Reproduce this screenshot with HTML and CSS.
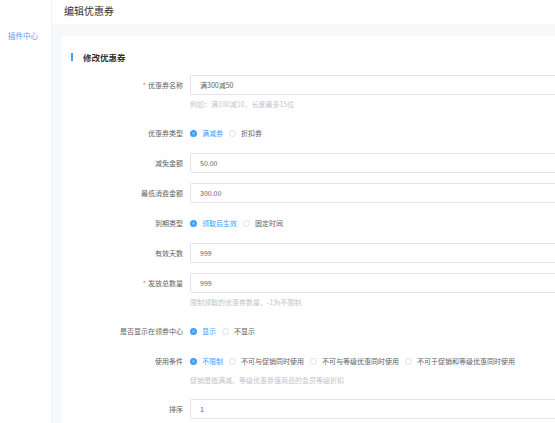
FILE: index.html
```html
<html>
<head>
    <meta charset="utf-8">
    <link rel="stylesheet" href="styles.css">
</head>
<body>
    <div class="layout">
        <aside class="sidebar">
            <div class="menu-item">插件中心</div>
        </aside>
        <div class="main">
            <div class="header">编辑优惠券</div>
            <div class="content">
                <div class="card">
                    <div class="section-title">修改优惠券</div>
                    <div class="form">
                        <div class="form-item">
                            <label class="label"><span class="req">*</span>优惠券名称</label>
                            <div class="field">
                                <div class="input">满300减50</div>
                                <div class="help">例如：满100减10，长度最多15位</div>
                            </div>
                        </div>
                        <div class="form-item">
                            <label class="label">优惠券类型</label>
                            <div class="field radios">
                                <span class="radio checked"><i></i>满减券</span>
                                <span class="radio"><i></i>折扣券</span>
                            </div>
                        </div>
                        <div class="form-item">
                            <label class="label">减免金额</label>
                            <div class="field"><div class="input">50.00</div></div>
                        </div>
                        <div class="form-item">
                            <label class="label">最低消费金额</label>
                            <div class="field"><div class="input">300.00</div></div>
                        </div>
                        <div class="form-item">
                            <label class="label">到期类型</label>
                            <div class="field radios">
                                <span class="radio checked"><i></i>领取后生效</span>
                                <span class="radio"><i></i>固定时间</span>
                            </div>
                        </div>
                        <div class="form-item">
                            <label class="label">有效天数</label>
                            <div class="field"><div class="input">999</div></div>
                        </div>
                        <div class="form-item">
                            <label class="label"><span class="req">*</span>发放总数量</label>
                            <div class="field">
                                <div class="input">999</div>
                                <div class="help">限制领取的优惠券数量，-1为不限制</div>
                            </div>
                        </div>
                        <div class="form-item">
                            <label class="label">是否显示在领券中心</label>
                            <div class="field radios">
                                <span class="radio checked"><i></i>显示</span>
                                <span class="radio"><i></i>不显示</span>
                            </div>
                        </div>
                        <div class="form-item">
                            <label class="label">使用条件</label>
                            <div class="field">
                                <div class="radios">
                                    <span class="radio checked"><i></i>不限制</span>
                                    <span class="radio"><i></i>不可与促销同时使用</span>
                                    <span class="radio"><i></i>不可与等级优惠同时使用</span>
                                    <span class="radio"><i></i>不可于促销和等级优惠同时使用</span>
                                </div>
                                <div class="help">促销是指满减、等级优惠券值商品的会员等级折扣</div>
                            </div>
                        </div>
                        <div class="form-item">
                            <label class="label">排序</label>
                            <div class="field"><div class="input">1</div></div>
                        </div>
                    </div>
                </div>
            </div>
        </div>
    </div>
</body>
</html>
```

FILE: styles.css
```css
* {
    margin: 0;
    padding: 0;
    box-sizing: border-box;
}
body {
    font-family: "Noto Sans CJK SC", "Noto Sans", sans-serif;
    background: #fff;
    overflow: hidden;
    width: 555px;
    height: 423px;
}
.layout {
    display: flex;
    height: 100%;
}
.sidebar {
    width: 52px;
    flex-shrink: 0;
    background: #fff;
    border-right: 1px solid #f0f1f4;
}
.menu-item {
    margin-top: 28px;
    padding-left: 8px;
    font-size: 7.5px;
    line-height: 16px;
    color: #5a9cf8;
}
.main {
    flex: 1;
    background: #f7f8fa;
    overflow: hidden;
}
.header {
    height: 24px;
    background: #fff;
    padding-left: 12px;
    font-size: 10px;
    line-height: 21px;
    color: #303133;
}
.content {
    padding: 12px 0 0 10px;
}
.card {
    width: 600px;
    height: 420px;
    background: #fff;
    padding: 17px 0 0 9px;
}
.section-title {
    height: 8px;
    line-height: 8px;
    border-left: 2px solid #409eff;
    padding-left: 10px;
    font-size: 8.5px;
    font-weight: bold;
    color: #303133;
    margin-bottom: 14px;
}
.form-item {
    display: flex;
    align-items: flex-start;
    margin-bottom: 10px;
}
.label {
    width: 119px;
    height: 20px;
    padding-right: 7px;
    text-align: right;
    font-size: 7px;
    line-height: 20px;
    color: #606266;
}
.req {
    color: #f56c6c;
    margin-right: 2px;
}
.field {
    flex: 1;
}
.input {
    width: 420px;
    height: 20px;
    border: 1px solid #e1e3e8;
    border-radius: 2px;
    padding: 0 9px;
    font-size: 7px;
    line-height: 18px;
    color: #606266;
}
.help {
    height: 18px;
    font-size: 7px;
    line-height: 18px;
    color: #c0c4cc;
}
.radios {
    display: flex;
    gap: 6px;
    height: 20px;
    align-items: center;
}
.radio {
    display: flex;
    align-items: center;
    gap: 5px;
    font-size: 7px;
    line-height: 10px;
    color: #606266;
}
.radio i {
    width: 7px;
    height: 7px;
    border-radius: 50%;
    border: 1px solid #dcdfe6;
    background: #fff;
}
.radio.checked {
    color: #409eff;
}
.radio.checked i {
    border: 2px solid #409eff;
    background: #fff;
    box-shadow: inset 0 0 0 1px #409eff;
}
```
